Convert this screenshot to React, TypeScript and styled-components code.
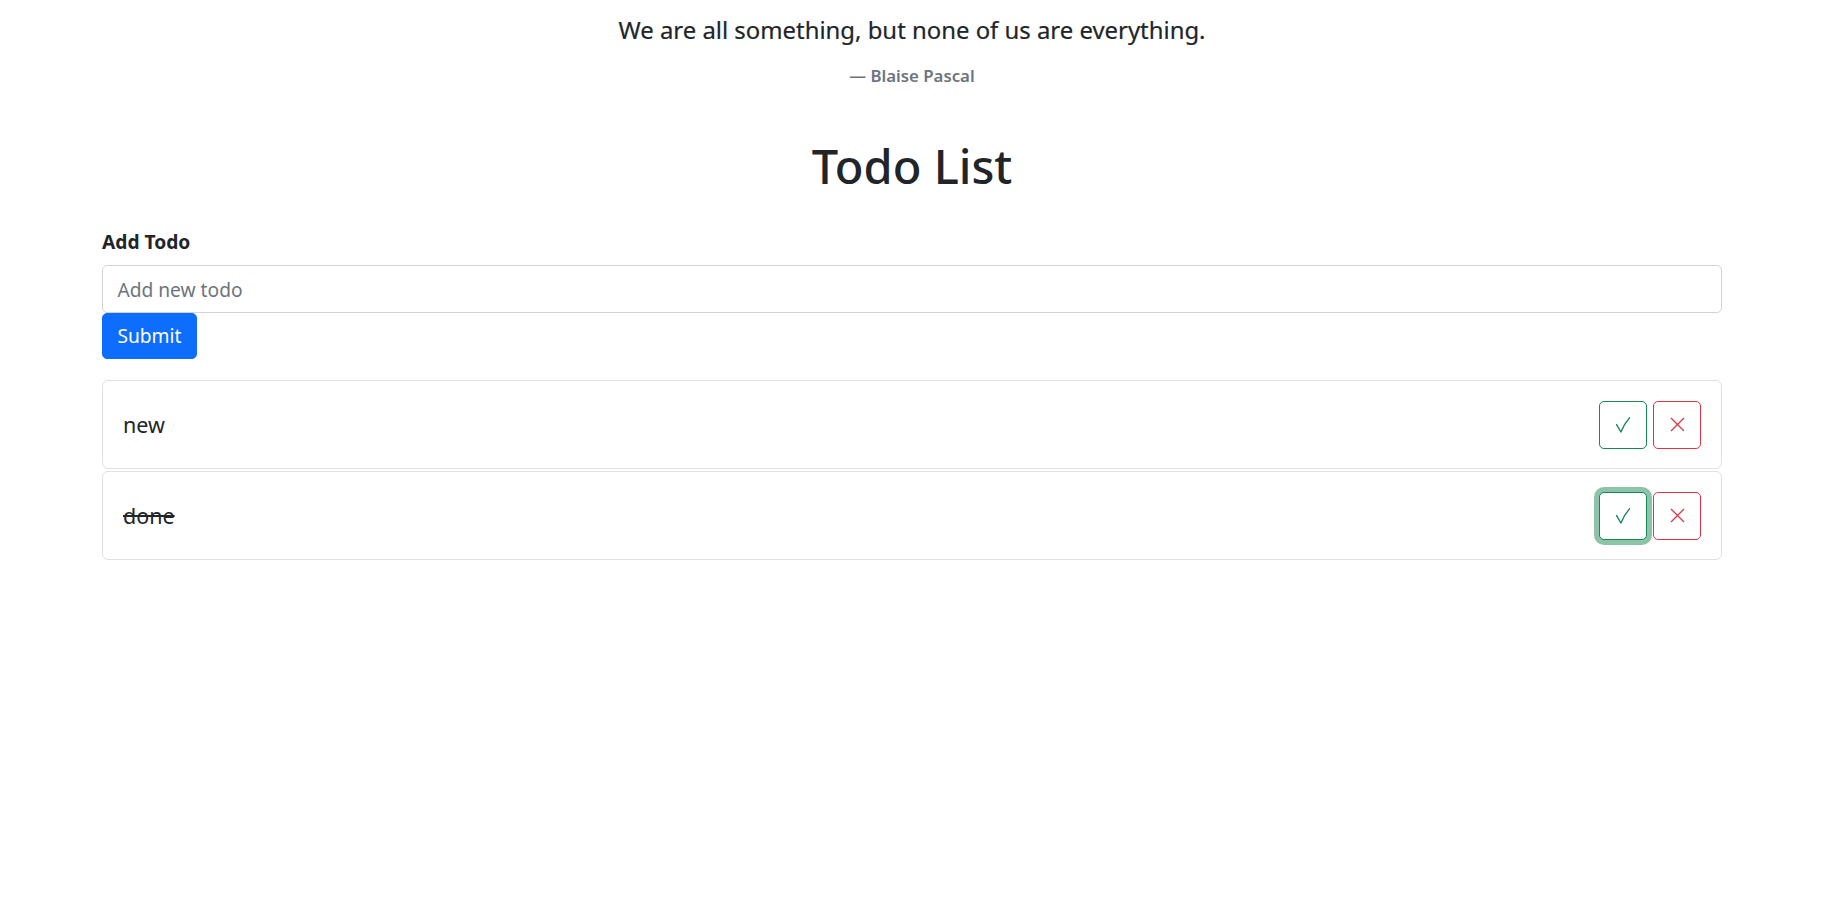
import styled, { createGlobalStyle } from "styled-components";
import { useState } from "react";

const GlobalStyle = createGlobalStyle`
  * { box-sizing: border-box; }
  body {
    margin: 0;
    background: #fff;
    color: #212529;
    font-family: "Noto Sans", "Open Sans", sans-serif;
    font-size: 19.2px;
    line-height: 1.5;
  }
`;

const Page = styled.div`
  padding: 12px 113px 40px 102px;
`;

const Quote = styled.figure`
  margin: 0;
  text-align: center;
`;

const QuoteText = styled.p`
  margin: 0 0 15px;
  font-size: 23.9px;
  line-height: 36px;
  -webkit-text-stroke: 0.2px #212529;
`;

const Author = styled.figcaption`
  font-size: 16.8px;
  line-height: 25px;
  font-weight: 600;
  color: #6c757d;
`;

const Title = styled.h1`
  margin: 50px 0 32px;
  text-align: center;
  font-size: 47px;
  font-weight: 500;
  line-height: 57.6px;
`;

const Form = styled.form`
  display: flex;
  flex-direction: column;
  align-items: flex-start;
`;

const Label = styled.label`
  font-weight: 700;
  line-height: 28.8px;
  margin-bottom: 9px;
`;

const Input = styled.input`
  width: 100%;
  height: 48px;
  padding: 4px 14.4px;
  border: 1px solid #ced4da;
  border-radius: 5px;
  font: inherit;
  color: #212529;
  outline: none;
  &::placeholder {
    color: #6c757d;
  }
`;

const SubmitButton = styled.button`
  height: 46px;
  padding: 0 14.4px;
  border: 1px solid #0d6efd;
  border-radius: 5px;
  background: #0d6efd;
  color: #fff;
  font: inherit;
  cursor: pointer;
`;

const List = styled.ul`
  list-style: none;
  margin: 21px 0 0;
  padding: 0;
  display: flex;
  flex-direction: column;
  gap: 2px;
`;

const Item = styled.li`
  display: flex;
  align-items: center;
  justify-content: space-between;
  padding: 19.5px 20px;
  border: 1px solid #dfe1e3;
  border-radius: 6px;
`;

const ItemText = styled.span<{ $done: boolean }>`
  font-size: 21.5px;
  text-decoration: ${(p) => (p.$done ? "line-through" : "none")};
  text-decoration-thickness: 2px;
`;

const Actions = styled.div`
  display: flex;
  gap: 6px;
`;

const IconButton = styled.button<{ $tone: "success" | "danger"; $focus?: boolean }>`
  width: 48px;
  height: 48px;
  padding: 0;
  display: flex;
  align-items: center;
  justify-content: center;
  background: #fff;
  border: 1px solid ${(p) => (p.$tone === "success" ? "#198754" : "#dc3545")};
  border-radius: 5px;
  color: ${(p) => (p.$tone === "success" ? "#198754" : "#dc3545")};
  box-shadow: ${(p) => (p.$focus ? "0 0 0 5px rgba(25, 135, 84, 0.5)" : "none")};
  cursor: pointer;
`;

const CheckIcon = () => (
  <svg width="14" height="16" viewBox="0 0 14 16" fill="none">
    <path
      d="M0.6 7.6 L4.9 15 Q8 7 13.6 0.6"
      stroke="currentColor"
      strokeWidth="1.4"
      strokeLinecap="round"
      strokeLinejoin="round"
    />
  </svg>
);

const CrossIcon = () => (
  <svg width="15" height="15" viewBox="0 0 15 15" fill="none">
    <path d="M1 1 L14 14 M14 1 L1 14" stroke="currentColor" strokeWidth="1.3" />
  </svg>
);

type Todo = { id: number; text: string; done: boolean };

function App() {
  const [todos] = useState<Todo[]>([
    { id: 1, text: "new", done: false },
    { id: 2, text: "done", done: true },
  ]);

  return (
    <Page>
      <GlobalStyle />
      <Quote>
        <QuoteText>We are all something, but none of us are everything.</QuoteText>
        <Author>— Blaise Pascal</Author>
      </Quote>
      <Title>Todo List</Title>
      <Form onSubmit={(e) => e.preventDefault()}>
        <Label htmlFor="todo">Add Todo</Label>
        <Input id="todo" placeholder="Add new todo" />
        <SubmitButton type="submit">Submit</SubmitButton>
      </Form>
      <List>
        {todos.map((t) => (
          <Item key={t.id}>
            <ItemText $done={t.done}>{t.text}</ItemText>
            <Actions>
              <IconButton $tone="success" $focus={t.done}>
                <CheckIcon />
              </IconButton>
              <IconButton $tone="danger">
                <CrossIcon />
              </IconButton>
            </Actions>
          </Item>
        ))}
      </List>
    </Page>
  );
}

export default App;
